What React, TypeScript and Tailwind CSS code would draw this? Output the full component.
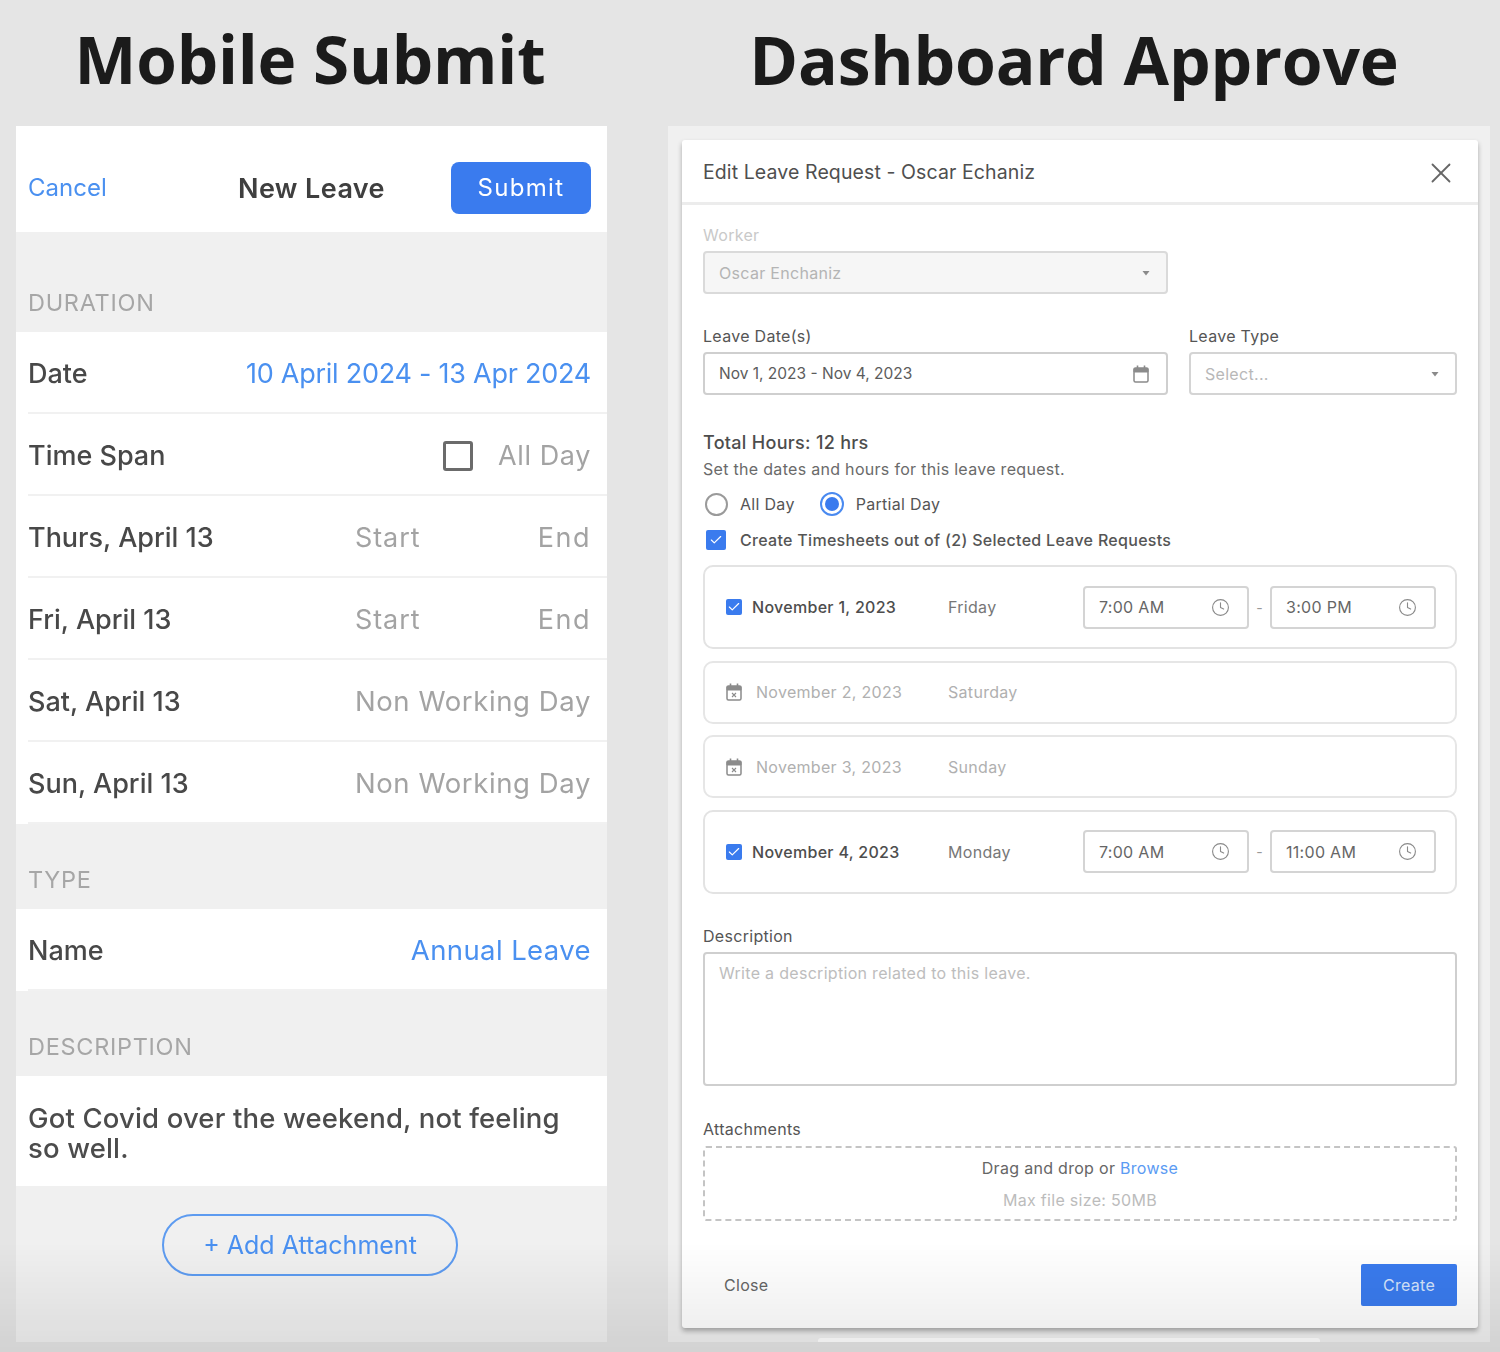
import { Check, Clock, X } from "lucide-react";

const MAIN = "font-['Inter','Liberation_Sans',sans-serif]";

function SectionLabel({ text, className }: { text: string; className: string }) {
  return (
    <div className={`flex items-end pl-3 pb-[17px] text-[23.5px] leading-[24px] tracking-[0.7px] text-[#a6a6a6] ${className}`}>
      {text}
    </div>
  );
}

function Row({ label, children }: { label: string; children?: React.ReactNode }) {
  return (
    <div className="ml-3 flex h-[82px] items-center justify-between border-b-2 border-[#f1f1f1] pt-1 pr-4">
      <span className="text-[27px] font-medium text-[#484848]">{label}</span>
      {children}
    </div>
  );
}

function StartEnd() {
  return (
    <div className="flex w-[236px] justify-between text-[27px] tracking-[0.9px] text-[#a3a3a3]">
      <span>Start</span>
      <span className="tracking-[1.5px]">End</span>
    </div>
  );
}

function MobilePanel() {
  return (
    <div className="w-[591px] shrink-0">
      <h2 className="flex h-[126px] items-center justify-center pr-[3px] pb-[8px] font-['Open_Sans',sans-serif] text-[65.6px] font-bold tracking-[-0.2px] text-[#1b1b1b]">
        Mobile Submit
      </h2>
      <div className="flex h-[1216px] flex-col bg-[#f0f0f0]">
        <div className="relative flex h-[106px] items-center justify-between bg-white pr-4 pl-3 pt-[18px]">
          <span className="text-[24px] text-[#4a90f0]">Cancel</span>
          <span className="absolute inset-x-0 top-[47px] text-center text-[27px] font-semibold leading-[32px] tracking-[0.4px] text-[#3f3f3f]">
            New Leave
          </span>
          <button className="flex h-[52px] w-[140px] items-center justify-center rounded-lg bg-[#3a7bee] text-[24px] tracking-[1.3px] text-white">
            Submit
          </button>
        </div>

        <SectionLabel text="DURATION" className="h-[100px]" />
        <div className="bg-white">
          <Row label="Date">
            <span className="text-[27px] tracking-[-0.25px] text-[#4a90f0]">10 April 2024 - 13 Apr 2024</span>
          </Row>
          <Row label="Time Span">
            <div className="flex items-center gap-[25px]">
              <span className="h-[30px] w-[30px] rounded-[3px] border-[3px] border-[#6b6b6b]" />
              <span className="text-[27px] tracking-[0.6px] text-[#a3a3a3]">All Day</span>
            </div>
          </Row>
          <Row label="Thurs, April 13">
            <StartEnd />
          </Row>
          <Row label="Fri, April 13">
            <StartEnd />
          </Row>
          <Row label="Sat, April 13">
            <span className="text-[27.5px] tracking-[0.6px] text-[#a3a3a3]">Non Working Day</span>
          </Row>
          <Row label="Sun, April 13">
            <span className="text-[27.5px] tracking-[0.6px] text-[#a3a3a3]">Non Working Day</span>
          </Row>
        </div>

        <SectionLabel text="TYPE" className="h-[85px]" />
        <div className="bg-white">
          <Row label="Name">
            <span className="text-[27.5px] tracking-[0.4px] text-[#4a90f0]">Annual Leave</span>
          </Row>
        </div>

        <SectionLabel text="DESCRIPTION" className="h-[85px]" />
        <div className="flex h-[110px] items-center bg-white px-3 pt-1 text-[27.5px] leading-[30px] font-medium tracking-[0.15px] text-[#4c4c4c]">
          <p className="w-[540px]">Got Covid over the weekend, not feeling so well.</p>
        </div>

        <div className="flex justify-center pt-[28px] pr-[3px]">
          <button className="flex h-[62px] w-[296px] items-center justify-center rounded-full border-2 border-[#5d9bf0] pt-[2px] text-[25px] text-[#4a90f0]">
            + Add Attachment
          </button>
        </div>
      </div>
    </div>
  );
}

function Caret() {
  return (
    <svg width="8" height="6" viewBox="0 0 8 6" className="text-[#8a8a8a]">
      <path d="M0.5 1h7L4 5.5z" fill="currentColor" />
    </svg>
  );
}

function CalendarIcon({ crossed }: { crossed?: boolean }) {
  return (
    <svg width="16" height="18" viewBox="0 0 16 18" fill="none" stroke="#8b8b8b">
      <rect x="1" y="3" width="14" height="14" rx="1.5" strokeWidth="1.5" />
      <path d="M1 3.5h14V7H1z" fill="#8b8b8b" strokeWidth="1" />
      <path d="M4.5 0.5v3M11.5 0.5v3" strokeWidth="1.6" />
      {crossed && <path d="M6 10l4 4M10 10l-4 4" strokeWidth="1.1" />}
    </svg>
  );
}

function Tick({ size }: { size: string }) {
  return (
    <span className={`flex items-center justify-center rounded-[2px] bg-[#3a7bee] ${size}`}>
      <Check size={14} strokeWidth={2} className="text-white" />
    </span>
  );
}

function TimeInput({ value }: { value: string }) {
  return (
    <div className="flex h-[43px] w-[166px] items-center justify-between rounded-[4px] border-2 border-[#d4d4d4] pr-[17px] pl-[14px] text-[#666]">
      <span>{value}</span>
      <Clock size={19} strokeWidth={1.4} className="text-[#8a8a8a]" />
    </div>
  );
}

function ActiveDay({ date, day, start, end }: { date: string; day: string; start: string; end: string }) {
  return (
    <div className="flex h-[84px] items-center rounded-[10px] border-2 border-[#e3e3e3] pr-[19px] pl-[21px]">
      <div className="flex w-[222px] items-center gap-[10px]">
        <Tick size="h-4 w-4" />
        <span className="font-medium text-[#4d4d4d]">{date}</span>
      </div>
      <span className="flex-1 text-[#777]">{day}</span>
      <TimeInput value={start} />
      <span className="w-[21px] text-center text-[14px] text-[#999]">-</span>
      <TimeInput value={end} />
    </div>
  );
}

function OffDay({ date, day }: { date: string; day: string }) {
  return (
    <div className="flex h-[63px] items-center rounded-[10px] border-2 border-[#e6e6e6] pl-[21px] text-[#b0b0b0]">
      <div className="flex w-[222px] items-center gap-[14px]">
        <CalendarIcon crossed />
        <span>{date}</span>
      </div>
      <span>{day}</span>
    </div>
  );
}

function DashboardPanel() {
  return (
    <div className="ml-[61px] w-[822px] shrink-0">
      <h2 className="flex h-[126px] items-center justify-center pr-[10px] pb-[8px] font-['Open_Sans',sans-serif] text-[66px] font-bold tracking-[-0.2px] text-[#1b1b1b]">
        Dashboard Approve
      </h2>
      <div className="relative h-[1216px] bg-[#f0f0f0] pt-[14px] pr-[12px] pl-[14px]">
        <div className="h-[1188px] rounded-[3px] bg-white shadow-[0_3px_5px_rgba(0,0,0,0.3)]">
          <div className="flex h-[65px] items-center justify-between border-b-[3px] border-[#ececec] pt-[3px] pr-[20px] pl-[21px]">
            <span className="text-[19.5px] tracking-[0.1px] text-[#4f4f4f]">Edit Leave Request - Oscar Echaniz</span>
            <X size={34} strokeWidth={1.3} className="text-[#666]" />
          </div>

          <div className="px-[21px] text-[16px] tracking-[0.3px] text-[#555]">
            <div className="mt-[20px] leading-[20px] text-[#c9c9c9]">Worker</div>
            <div className="mt-[6px] flex h-[43px] w-[465px] items-center justify-between rounded-[4px] border-2 border-[#dadada] bg-[#f6f6f6] pr-4 pl-[14px] text-[#b4b4b4]">
              <span>Oscar Enchaniz</span>
              <Caret />
            </div>

            <div className="mt-[32px] flex gap-[21px]">
              <div className="w-[465px]">
                <div className="leading-[20px]">Leave Date(s)</div>
                <div className="mt-[6px] flex h-[43px] items-center justify-between rounded-[4px] border-2 border-[#cfcfcf] pr-[17px] pl-[14px] text-[15.5px] tracking-normal text-[#5c5c5c]">
                  <span>Nov 1, 2023 - Nov 4, 2023</span>
                  <CalendarIcon />
                </div>
              </div>
              <div className="flex-1">
                <div className="leading-[20px]">Leave Type</div>
                <div className="mt-[6px] flex h-[43px] items-center justify-between rounded-[4px] border-2 border-[#d4d4d4] pr-4 pl-[14px] text-[#b8b8b8]">
                  <span>Select...</span>
                  <Caret />
                </div>
              </div>
            </div>

            <div className="mt-[37px] text-[18px] leading-[22px] font-medium text-[#4d4d4d]">Total Hours: 12 hrs</div>
            <div className="mt-[5px] leading-[20px] text-[#6a6a6a]">Set the dates and hours for this leave request.</div>

            <div className="mt-[13px] flex h-[24px] items-center pl-[2px]">
              <span className="h-[23px] w-[23px] rounded-full border-2 border-[#9a9a9a]" />
              <span className="ml-[12px] text-[#555]">All Day</span>
              <span className="ml-[25px] flex h-[24px] w-[24px] items-center justify-center rounded-full border-2 border-[#4a8af0]">
                <span className="h-[14px] w-[14px] rounded-full bg-[#3a7bee]" />
              </span>
              <span className="ml-[12px] text-[#555]">Partial Day</span>
            </div>
            <div className="mt-[13px] flex h-[22px] items-center gap-[14px] pl-[3px]">
              <Tick size="h-[20px] w-[20px]" />
              <span className="font-medium text-[#555]">Create Timesheets out of (2) Selected Leave Requests</span>
            </div>

            <div className="mt-[14px] flex flex-col gap-[11.5px]">
              <ActiveDay date="November 1, 2023" day="Friday" start="7:00 AM" end="3:00 PM" />
              <OffDay date="November 2, 2023" day="Saturday" />
              <OffDay date="November 3, 2023" day="Sunday" />
              <ActiveDay date="November 4, 2023" day="Monday" start="7:00 AM" end="11:00 AM" />
            </div>

            <div className="mt-[32px] leading-[20px]">Description</div>
            <div className="mt-[6px] h-[134px] rounded-[4px] border-2 border-[#cfcfcf] px-[14px] py-[7px] text-[#bdbdbd]">
              Write a description related to this leave.
            </div>

            <div className="mt-[33px] leading-[20px]">Attachments</div>
            <div className="mt-[7px] flex h-[75px] flex-col items-center rounded-[3px] border-2 border-dashed border-[#c4c4c4] pt-[10px]">
              <div className="leading-[20px] text-[#666]">
                Drag and drop or <span className="text-[#5b9bf3]">Browse</span>
              </div>
              <div className="mt-[12px] leading-[20px] text-[#bcbcbc]">Max file size: 50MB</div>
            </div>

            <div className="mt-[43px] flex items-center justify-between pl-[21px]">
              <span className="text-[#666]">Close</span>
              <button className="flex h-[42px] w-[96px] items-center justify-center rounded-[2px] bg-[#3a7bee] text-[#d5e4fb]">
                Create
              </button>
            </div>
          </div>
        </div>
        <div className="absolute bottom-0 left-[150px] h-[4px] w-[502px] rounded-t-[3px] bg-white" />
      </div>
    </div>
  );
}

export default function App() {
  return (
    <div className="relative h-[1352px] w-[1500px] overflow-hidden bg-[#e5e5e5]">
      <div className={`flex h-full pl-4 blur-[0.6px] ${MAIN}`}>
        <MobilePanel />
        <DashboardPanel />
      </div>
      <div className="pointer-events-none absolute inset-x-0 bottom-0 h-[110px] bg-gradient-to-b from-transparent to-black/[0.08]" />
    </div>
  );
}
